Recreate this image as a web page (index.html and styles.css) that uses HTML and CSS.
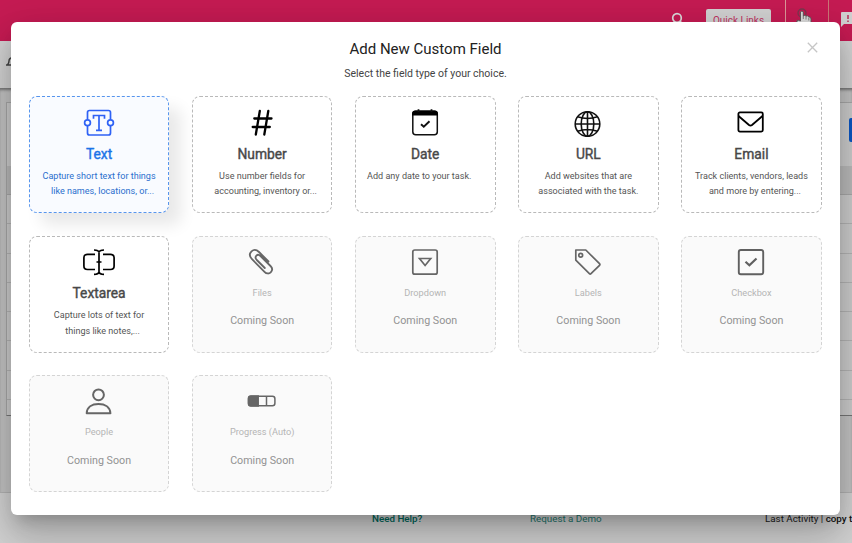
FILE: index.html
```html
<!DOCTYPE html>
<html lang="en">
<head>
<meta charset="utf-8">
<title>Add New Custom Field</title>
<link rel="stylesheet" href="styles.css">
</head>
<body>
<div class="page">
  <header class="topbar">
    <svg class="search" width="14" height="16" viewBox="0 0 14 16" fill="none" stroke="#ddd" stroke-width="1.7"><circle cx="6" cy="6" r="4.3"/><path d="M9 9l4 5"/></svg>
    <span class="quick">Quick Links</span>
    <span class="pointer"><svg width="22" height="20" viewBox="0 0 22 20"><circle cx="7" cy="7" r="4" fill="none" stroke="#793a50" stroke-width="1.300"/><path d="M5.500 6Q7 4 8.300 6V10Q10 8.500 11 10.200Q13 9 13.800 11Q16 10.500 16 13V20H6L1.500 15Q3 13.500 5.500 15Z" fill="#ddd" stroke="#555" stroke-width=".9"/><path d="M8.300 10v3M11 10.500v3M13.800 11.500v3" stroke="#666" stroke-width=".8"/></svg></span>
    <svg class="chat" width="12" height="16" viewBox="0 0 12 16"><path d="M2 0H12V12H4L1 15V1Q1 0 2 0Z" fill="#d3d3d3"/><path d="M8 3v4M8 8.500v1.500" stroke="#b9305a" stroke-width="1.500"/></svg>
  </header>
  <div class="subbar"><svg width="9" height="12" viewBox="0 0 9 12" fill="none" stroke="#444" stroke-width="1.500"><path d="M0 9H9M1.500 9Q3 7 3 5Q3 2 7 1.500"/></svg></div>
  <main class="content">
    <div class="panel">
      <div class="tools"><span class="add"></span></div>
      <div class="head"></div>
      <div class="row"></div><div class="row"></div><div class="row"></div><div class="row"></div><div class="row"></div><div class="row"></div><div class="row"></div>
    </div>
  </main>
  <footer class="footer"><b class="help">Need Help?</b><span class="demo">Request a Demo</span><span class="activity">Last Activity | <b>copy t</b></span></footer>
</div>

<section class="modal">
  <svg class="close" width="11" height="11" viewBox="0 0 11 11" stroke="#c6c6c6" stroke-width="1.300"><path d="M.8.8L10.200 10.200M10.200.8L.8 10.200"/></svg>
  <h1>Add New Custom Field</h1>
  <p class="lead">Select the field type of your choice.</p>
  <div class="grid">
    <article class="card selected">
      <svg class="icon" viewBox="0 0 32 28" fill="none" stroke="#2f62f5" stroke-width="1.700"><path d="M4.500 10.500V3.500Q4.500 1.500 6.500 1.500H25.500Q27.500 1.500 27.500 3.500V10.500M27.500 17V24Q27.500 26 25.500 26H6.500Q4.500 26 4.500 24V17"/><circle cx="4.500" cy="13.800" r="2.900"/><circle cx="27.500" cy="13.800" r="2.900"/><path d="M10.500 9.800V6.500H21.500V9.800M16 6.500V21.500M13 21.300H19" stroke-width="1.700"/></svg>
      <h2>Text</h2>
      <p><span>Capture short text for things</span><span class="shift">like names, locations, or...</span></p>
    </article>
    <article class="card">
      <svg class="icon" viewBox="0 0 32 28" fill="none" stroke="#000" stroke-width="2.300" stroke-linecap="round"><path d="M13.800 2L9.800 25.500M22.300 2L18.300 25.500M8.300 9.500H25.500M6.700 18H23.800"/></svg>
      <h2>Number</h2>
      <p><span>Use number fields for</span><span class="shift">accounting, inventory or...</span></p>
    </article>
    <article class="card">
      <svg class="icon" viewBox="0 0 32 28" fill="none" stroke="#111" stroke-width="1.500"><rect x="3.800" y="2.300" width="24.500" height="23.500" rx="3"/><path d="M3 6.500V5Q3 1.600 6.500 1.600H25.500Q29 1.600 29 5V6.500Z" fill="#000" stroke="none"/><path d="M9.500.3V3M22.500.3V3" stroke-width="1.800"/><path d="M12 15.200L14.800 17.800L20.500 12.200" stroke-width="1.900"/></svg>
      <h2>Date</h2>
      <p><span class="left">Add any date to your task.</span></p>
    </article>
    <article class="card">
      <svg class="icon" viewBox="0 0 32 28" fill="none" stroke="#111" stroke-width="1.600"><circle cx="15.500" cy="15" r="12.300"/><ellipse cx="15.500" cy="15" rx="6.300" ry="12.300"/><path d="M15.500 2.700V27.300M3.200 15H27.800M5.500 7.700Q15.500 11.200 25.500 7.700M5.500 22.300Q15.500 18.700 25.500 22.300"/></svg>
      <h2>URL</h2>
      <p><span>Add websites that are</span><span>associated with the task.</span></p>
    </article>
    <article class="card">
      <svg class="icon" viewBox="0 0 32 28" fill="none" stroke="#000" stroke-width="1.800"><rect x="3.400" y="3.400" width="24.400" height="19.200" rx="1.500"/><path d="M3.500 7L14 16Q15.500 17.200 17 16L27.500 7"/></svg>
      <h2>Email</h2>
      <p><span>Track clients, vendors, leads</span><span class="shift">and more by entering...</span></p>
    </article>
    <article class="card">
      <svg class="icon" viewBox="0 0 32 28" fill="none" stroke="#000" stroke-width="1.700"><path d="M12 6.300H4.500Q.9 6.300 .9 9.800V18Q.9 21.500 4.500 21.500H12M20 6.300H27.500Q31.100 6.300 31.100 9.800V18Q31.100 21.500 27.500 21.500H20M16 5V24M13.500 14H18.500M11 2Q15.500 2 16 4.500Q16.500 2 21 2M11 26.300Q15.500 26.300 16 23.800Q16.500 26.300 21 26.300"/></svg>
      <h2>Textarea</h2>
      <p><span>Capture lots of text for</span><span class="shift">things like notes,...</span></p>
    </article>
    <article class="card soon">
      <svg class="icon" viewBox="0 0 32 28" fill="none" stroke="#666" stroke-width="1.800" stroke-linecap="round"><path d="M22.500 13.500L13 4C10.500 1.500 7.500 1.500 5.500 3.300C3.300 5.500 3.500 8.500 5.800 11L18.500 23.800C20.500 25.900 23 26 24.700 24.300C26.500 22.500 26.500 20 24.500 18L14.500 8C13 6.500 11.500 6.500 10.400 7.600C9.200 8.800 9.400 10.500 10.800 12L18.800 20"/></svg>
      <h3>Files</h3><p>Coming Soon</p>
    </article>
    <article class="card soon">
      <svg class="icon" viewBox="0 0 32 28" fill="none" stroke="#666" stroke-width="1.700"><rect x="3.800" y="2" width="24.400" height="24.200" rx="2"/><path d="M10.500 10.500H21.700L16.100 17.500Z"/></svg>
      <h3>Dropdown</h3><p>Coming Soon</p>
    </article>
    <article class="card soon">
      <svg class="icon" viewBox="0 0 32 28" fill="none" stroke="#666" stroke-width="1.700" stroke-linejoin="round"><path d="M3.800 2H13.800L27.500 15.700Q28.300 16.500 27.500 17.300L19 25.700Q18.200 26.500 17.400 25.700L3.800 12.200Z"/><circle cx="8.700" cy="7.200" r="1.900"/></svg>
      <h3>Labels</h3><p>Coming Soon</p>
    </article>
    <article class="card soon">
      <svg class="icon" viewBox="0 0 32 28" fill="none" stroke="#606060" stroke-width="1.900"><rect x="3.800" y="2" width="24.400" height="24.200" rx="2"/><path d="M10.500 13.800L14.400 17.300L21.500 10.500" stroke-width="2.200"/></svg>
      <h3>Checkbox</h3><p>Coming Soon</p>
    </article>
    <article class="card soon">
      <svg class="icon" viewBox="0 0 32 28" fill="none" stroke="#666" stroke-width="2"><circle cx="15.500" cy="6.800" r="5.400"/><path d="M3.700 25.200C4 19 9 16 15.500 16S27 19 27.400 25.200Z" stroke-linejoin="round"/></svg>
      <h3>People</h3><p>Coming Soon</p>
    </article>
    <article class="card soon">
      <svg class="icon" viewBox="0 0 32 28" fill="none" stroke="#666" stroke-width="1.500"><rect x="2.500" y="8.200" width="26.400" height="9.600" rx="2.500"/><path d="M12.200 8V18H5Q2.500 18 2.500 15.500V10.500Q2.500 8 5 8Z" fill="#666"/><path d="M20.500 8V18"/></svg>
      <h3>Progress (Auto)</h3><p>Coming Soon</p>
    </article>
  </div>
</section>
</body>
</html>
```
FILE: styles.css
```css
* { box-sizing: border-box; }
body { margin: 0; width: 852px; height: 543px; overflow: hidden; position: relative; font-family: Roboto, sans-serif; }
h1, h2, h3, p { margin: 0; font-weight: 400; }

.page { height: 543px; display: flex; flex-direction: column; overflow: hidden; background: #cdcdcd; }
.topbar { height: 41px; flex: none; background: #c61b53; display: flex; justify-content: flex-end; align-items: flex-start; }
.search { margin: 12px 21px 0 0; }
.quick { width: 65px; height: 24px; margin: 9px 14px 0 0; padding-top: 5px; background: #d3d3d3; border-radius: 2px; color: #c0305f; font-size: 10px; line-height: 14px; text-align: center; white-space: nowrap; }
.pointer { width: 44px; height: 41px; border-left: 1px solid #d99; border-right: 1px solid #c77; padding: 6px 0 0 9px; }
.chat { margin: 12px 0 0 11px; }
.subbar { height: 47px; flex: none; background: #d4d4d4; padding: 12px 0 0 6px; }
.content { height: 405px; flex: none; background: #c6c6c6; border-bottom: 1px solid #b5b5b5; padding: 14px 0 0 6px; box-shadow: inset 0 3px 3px -1px #0006; }
.panel { height: 314px; background: #cfcfcf; border: 1px solid #aaa; border-right: 0; border-bottom-color: #777; }
.tools { height: 63px; display: flex; justify-content: flex-end; align-items: flex-start; padding-top: 15px; }
.add { width: 3px; height: 24px; background: #0b57c4; border-radius: 2px 0 0 2px; }
.head { height: 29px; background: #bdbdbd; border-bottom: 1px solid #aaa; }
.row { height: 29.3px; border-bottom: 1px solid #b6b6b6; }
.footer { flex: 1; background: #d4d4d4; display: grid; grid-template-columns: 158px 235px 1fr; padding: 18.5px 0 0 372px; font-size: 9.8px; line-height: 13px; white-space: nowrap; }
.help { color: #00695c; font-weight: 500; }
.demo { color: #267a70; }
.activity { color: #222; }
.activity b { font-weight: 500; color: #111; }

.modal { position: absolute; left: 11px; top: 22px; width: 829px; height: 493px; background: #fff; border-radius: 6px; box-shadow: 0 11px 15px -7px rgba(0,0,0,.2), 0 24px 38px 3px rgba(0,0,0,.14), 0 9px 46px 8px rgba(0,0,0,.12); padding: 17px 18px 0; text-align: center; }
.close { position: absolute; right: 22px; top: 20px; }
.modal h1 { font-size: 15px; line-height: 20px; color: #222; }
.lead { font-size: 10.5px; line-height: 14px; margin-top: 8px; color: #444; }
.grid { display: grid; grid-template-columns: repeat(5, 140.5px); grid-auto-rows: 117px; column-gap: 22.6px; row-gap: 22.500px; margin: 15px 0 0 -.2px; }
.card { border: 1px dashed #b9b9b9; border-radius: 8px; background: #fff; display: flex; flex-direction: column; align-items: center; padding-top: 11.6px; }
.icon { width: 32px; height: 28px; flex: none; display: block; }
.card h2 { font-size: 13.8px; line-height: 18px; color: #484848; -webkit-text-stroke: .4px currentColor; margin-top: 8px; }
.card p { font-size: 9.05px; line-height: 15.2px; margin-top: 6.4px; color: #555; white-space: nowrap; }
.card span { display: block; }
.shift { padding-left: 7px; }
.left { padding-right: 12px; }
.selected { border-color: #5795ed; background: #f9fbff; box-shadow: 12px 12px 16px rgba(0,0,0,.09); }
.selected h2 { color: #1a73e8; }
.selected p { color: #2b6fce; }
.soon { background: #fafafa; border-color: #d4d4d4; }
.soon h3 { font-size: 9.2px; line-height: 14px; margin-top: 9.8px; color: #b5b5b5; }
.soon p { font-size: 10.7px; line-height: 16px; margin-top: 13.3px; color: #929292; }
```
